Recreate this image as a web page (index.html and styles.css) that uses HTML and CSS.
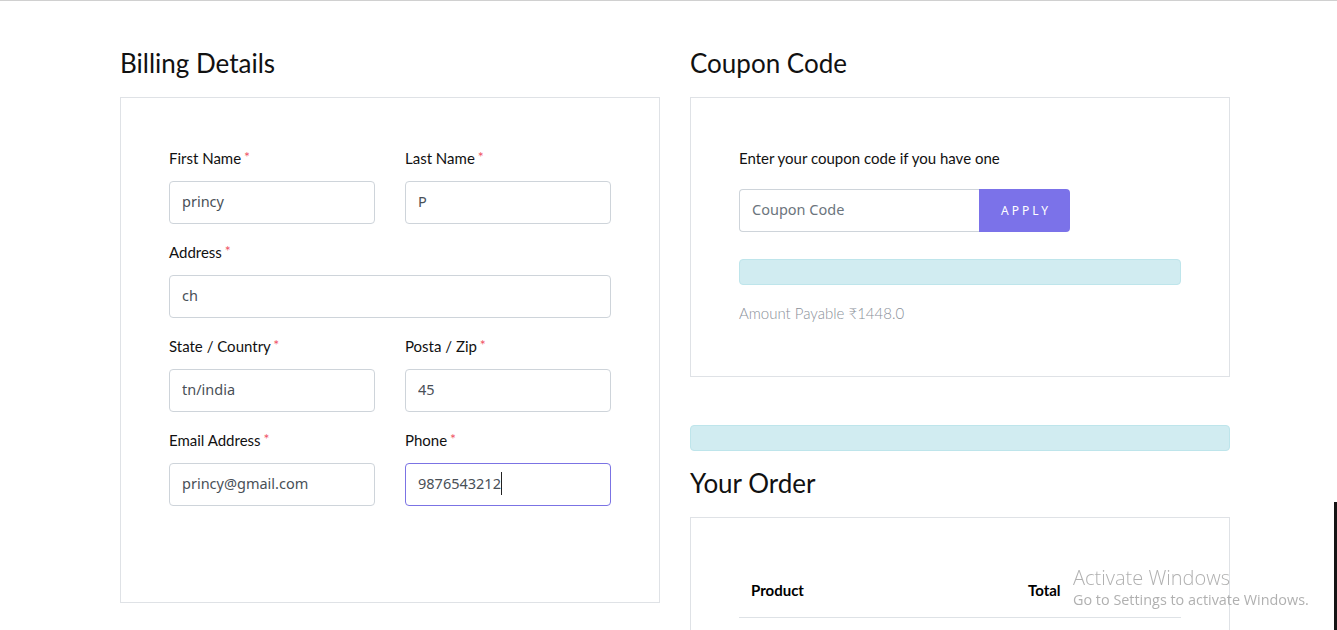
FILE: index.html
```html
<!DOCTYPE html>
<html lang="en">
<head>
<meta charset="utf-8">
<title>Checkout</title>
<link rel="stylesheet" href="styles.css">
</head>
<body>
<div class="topline"></div>
<main class="page">
  <section class="col">
    <h2 class="heading">Billing Details</h2>
    <div class="card billing">
      <form class="form-grid">
        <div class="field">
          <label class="label">First Name <span class="req">*</span></label>
          <input class="input" type="text" value="princy">
        </div>
        <div class="field">
          <label class="label">Last Name <span class="req">*</span></label>
          <input class="input" type="text" value="P">
        </div>
        <div class="field wide">
          <label class="label">Address <span class="req">*</span></label>
          <input class="input" type="text" value="ch">
        </div>
        <div class="field">
          <label class="label">State / Country <span class="req">*</span></label>
          <input class="input" type="text" value="tn/india">
        </div>
        <div class="field">
          <label class="label">Posta / Zip <span class="req">*</span></label>
          <input class="input" type="text" value="45">
        </div>
        <div class="field">
          <label class="label">Email Address <span class="req">*</span></label>
          <input class="input" type="text" value="princy@gmail.com">
        </div>
        <div class="field">
          <label class="label">Phone <span class="req">*</span></label>
          <div class="input-wrap">
            <input class="input focused" type="text" value="9876543212">
            <span class="caret"></span>
          </div>
        </div>
      </form>
    </div>
  </section>

  <section class="col">
    <h2 class="heading">Coupon Code</h2>
    <div class="card coupon">
      <p class="coupon-text">Enter your coupon code if you have one</p>
      <div class="coupon-group">
        <input class="coupon-input" type="text" placeholder="Coupon Code">
        <button class="apply-btn" type="button">APPLY</button>
      </div>
      <div class="alert inner-alert"></div>
      <p class="amount">Amount Payable ₹1448.0</p>
    </div>

    <div class="alert outer-alert"></div>

    <h2 class="heading">Your Order</h2>
    <div class="card order">
      <table class="order-table">
        <thead>
          <tr>
            <th class="th-product">Product</th>
            <th class="th-total">Total</th>
          </tr>
        </thead>
      </table>
    </div>
  </section>
</main>

<div class="watermark">
  <div class="wm-title">Activate Windows</div>
  <div class="wm-sub">Go to Settings to activate Windows.</div>
</div>
<div class="edge-strip"></div>
</body>
</html>
```

FILE: styles.css
```css
html, body {
  margin: 0;
  padding: 0;
  overflow: hidden;
  background: #fff;
}

body {
  font-family: "Lato", "Noto Sans", sans-serif;
  color: #111;
}

.topline {
  height: 1px;
  background: #d0d0d0;
}

.page {
  display: flex;
  gap: 30px;
  padding: 46px 0 0 120px;
}

.col {
  width: 540px;
  flex: 0 0 540px;
}

.heading {
  margin: 0 0 18px;
  font-family: "Lato", "Noto Sans", sans-serif;
  font-weight: 400;
  font-size: 26px;
  line-height: 32px;
  color: #111;
}

.card {
  border: 1px solid #dfe2e6;
  box-sizing: border-box;
}

.billing {
  padding: 50px 48px 78px;
}

.form-grid {
  display: grid;
  grid-template-columns: 206px 206px;
  column-gap: 30px;
  margin: 0;
}

.field {
  margin-bottom: 18px;
}

.field.wide {
  grid-column: 1 / span 2;
}

.label {
  display: block;
  height: 20px;
  font-size: 15px;
  line-height: 20px;
  margin-bottom: 13px;
  color: #111;
}

.req {
  color: #ef5466;
  font-size: 14px;
  line-height: 0;
  vertical-align: 2px;
  margin-left: -1px;
}

.input {
  display: block;
  width: 100%;
  height: 43px;
  box-sizing: border-box;
  border: 1px solid #ced4da;
  border-radius: 4px;
  padding: 0 12px 4px;
  font-family: "Noto Sans", sans-serif;
  font-size: 14.5px;
  color: #495057;
  background: #fff;
  outline: none;
}

.input.focused {
  border-color: #7b73e4;
}

.input-wrap {
  position: relative;
}

.caret {
  position: absolute;
  left: 96px;
  top: 9px;
  width: 1px;
  height: 23px;
  background: #222;
}

.coupon {
  padding: 50px 48px 53px;
}

.coupon-text {
  margin: 0 0 21px;
  font-size: 15px;
  line-height: 20px;
  color: #111;
}

.coupon-group {
  display: flex;
  height: 43px;
  margin-bottom: 27px;
}

.coupon-input {
  width: 240px;
  height: 43px;
  box-sizing: border-box;
  border: 1px solid #ced4da;
  border-right: none;
  border-radius: 4px 0 0 4px;
  padding: 0 12px 4px;
  font-family: "Noto Sans", sans-serif;
  font-size: 14.5px;
  color: #495057;
  outline: none;
}

.coupon-input::placeholder {
  color: #6c757d;
}

.apply-btn {
  width: 91px;
  height: 43px;
  border: none;
  border-radius: 0 4px 4px 0;
  background: #7b72e9;
  color: #fff;
  font-family: "Noto Sans", sans-serif;
  font-size: 12px;
  letter-spacing: 3px;
  padding: 0 0 0 3px;
  cursor: pointer;
}

.alert {
  height: 26px;
  box-sizing: border-box;
  background: #d1ecf1;
  border: 1px solid #bee5eb;
  border-radius: 4px;
}

.inner-alert {
  margin-bottom: 18px;
}

.amount {
  margin: 0;
  font-size: 15px;
  line-height: 20px;
  font-weight: 300;
  color: #8a9099;
}

.outer-alert {
  margin: 48px 0 16px;
}

.order {
  padding: 50px 48px 0;
  height: 200px;
}

.order-table {
  width: 100%;
  border-collapse: collapse;
}

.order-table th {
  font-family: "Lato", sans-serif;
  font-weight: 700;
  font-size: 15px;
  line-height: 24px;
  text-align: left;
  padding: 10px 12px 15px;
  border-bottom: 1px solid #dee2e6;
  color: #000;
}

.th-product {
  width: 253px;
}

.watermark {
  position: fixed;
  left: 1073px;
  top: 565px;
  color: rgba(150, 150, 150, 0.75);
  font-family: "Open Sans", "Noto Sans", sans-serif;
  pointer-events: none;
}

.wm-title {
  font-size: 20px;
  line-height: 25px;
  font-weight: 300;
}

.wm-sub {
  font-size: 14.4px;
  line-height: 20px;
}

.edge-strip {
  position: fixed;
  right: 0;
  top: 502px;
  bottom: 0;
  width: 3px;
  background: #151515;
}
```
